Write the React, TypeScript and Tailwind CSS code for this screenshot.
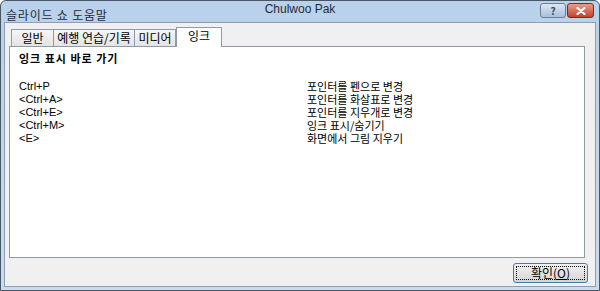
const KR = "[font-family:'Noto_Sans_CJK_KR','Liberation_Sans',sans-serif]";
const LAT = "[font-family:'Liberation_Sans','Noto_Sans_CJK_KR',sans-serif]";

const rows = [
  ["Ctrl+P", "포인터를 펜으로 변경"],
  ["<Ctrl+A>", "포인터를 화살표로 변경"],
  ["<Ctrl+E>", "포인터를 지우개로 변경"],
  ["<Ctrl+M>", "잉크 표시/숨기기"],
  ["<E>", "화면에서 그림 지우기"],
];

const tabs = [
  { label: "일반", w: "w-[43px]" },
  { label: "예행 연습/기록", w: "w-[82px]" },
  { label: "미디어", w: "w-[42px]" },
];

export default function App() {
  return (
    <div className={`${KR} flex h-[291px] w-[600px] flex-col overflow-hidden rounded-t-[6px] border border-[#4a5565] bg-gradient-to-b from-[#b9d1ea] to-[#c9dcf0]`}>
      {/* title bar */}
      <div className="relative flex h-[21px] shrink-0 items-end px-[5px]">
        <span className="text-[12px] leading-[14px] tracking-[0.8px] text-[#1e2a3a]">슬라이드 쇼 도움말</span>
        <span className={`${LAT} absolute left-0 right-0 top-[2px] text-center text-[12px] leading-none text-[#1e2a3a]`}>
          Chulwoo Pak
        </span>
        <div className="absolute right-[5px] top-[2px] flex gap-[1px]">
          <div className="flex h-[15px] w-[26px] items-center justify-center rounded-[3px] border border-[#6d7f97] bg-gradient-to-b from-[#dbe7f4] to-[#a9c0dc] text-[10px] font-bold leading-none text-[#3b4a5e]">
            ?
          </div>
          <div className="flex h-[15px] w-[27px] items-center justify-center rounded-[3px] border border-[#7a2a20] bg-gradient-to-b from-[#e99a8c] to-[#c4402c]">
            <svg width="10" height="8" viewBox="0 0 10 8">
              <path d="M1.5 1 L8.5 7 M8.5 1 L1.5 7" stroke="#fff" strokeWidth="2.2" strokeLinecap="round" />
            </svg>
          </div>
        </div>
      </div>

      {/* client area */}
      <div className="mx-[3px] mb-[3px] flex flex-1 flex-col border border-[#8d9cb1] bg-[#f0f0f0] px-[4px] pt-[4px]">
        <div className="flex items-end pl-[2px]">
          {tabs.map((t) => (
            <div
              key={t.label}
              className={`${t.w} -mr-px flex h-[17px] items-center justify-center border border-b-0 border-[#8e9aab] bg-gradient-to-b from-[#f6f6f6] to-[#e4e4e4] text-[12px] leading-none text-black`}
            >
              {t.label}
            </div>
          ))}
          <div className="relative z-10 -mb-px ml-px flex h-[20px] w-[46px] items-start justify-center border border-b-0 border-[#8e9aab] bg-white pt-[2px] text-[12px] leading-none text-black">
            잉크
          </div>
        </div>
        <div className="mr-[6px] h-[212px] border border-[#8e9aab] bg-white px-[9px] pt-[4px]">
          <div className="text-[11px] font-bold leading-[14px] tracking-[1px] text-black">잉크 표시 바로 가기</div>
          <div className="mt-[15px] flex flex-col">
            {rows.map(([k, v]) => (
              <div key={k} className="flex h-[13px] items-center">
                <span className={`${LAT} w-[288px] text-[11px] leading-[13px] text-black`}>{k}</span>
                <span className="text-[11px] leading-[13px] text-black">{v}</span>
              </div>
            ))}
          </div>
        </div>
        <div className="mr-[3px] mt-[5px] flex justify-end">
          <button className="flex h-[20px] w-[75px] items-center justify-center rounded-[3px] border border-[#3c7fb1] bg-gradient-to-b from-[#f2f2f2] to-[#d4d4d4] text-[12px] leading-none text-black outline-1 outline-dotted outline-offset-[-4px] outline-black">
            확인(<span className="underline">O</span>)
          </button>
        </div>
      </div>
    </div>
  );
}
